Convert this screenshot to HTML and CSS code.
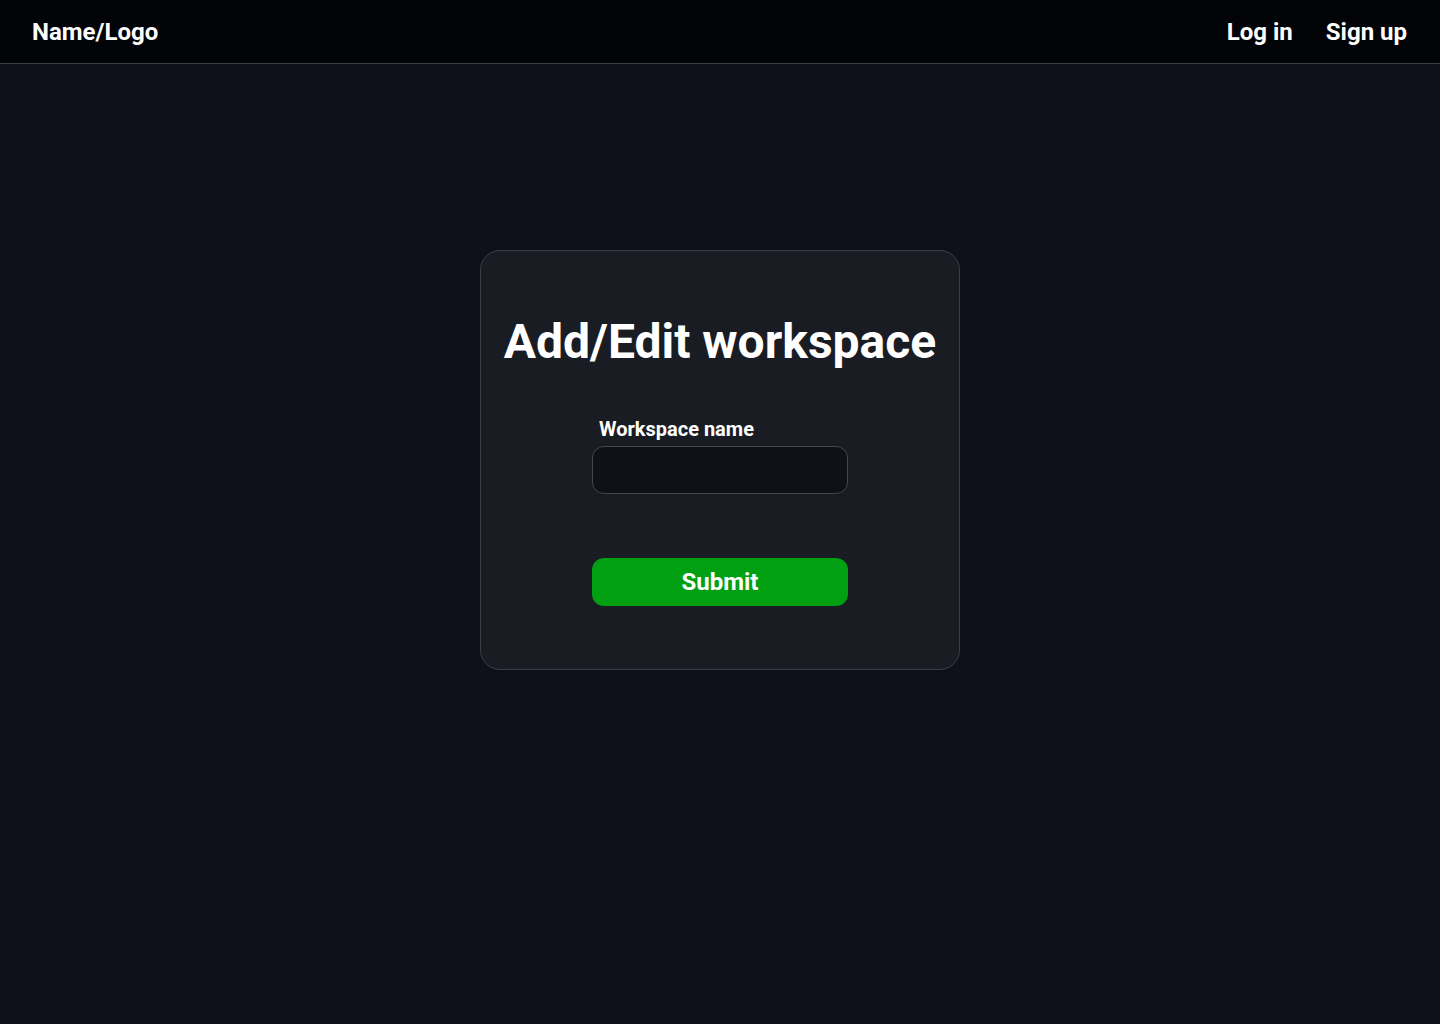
FILE: index.html
```html
<!DOCTYPE html>
<html lang="en">
<head>
<meta charset="utf-8">
<title>Add/Edit workspace</title>
<link rel="stylesheet" href="styles.css">
</head>
<body>
<header class="topbar">
  <a class="brand" href="#">Name/Logo</a>
  <nav class="nav">
    <a href="#" class="nav-link">Log in</a>
    <a href="#" class="nav-link">Sign up</a>
  </nav>
</header>
<main class="main">
  <form class="card">
    <h1 class="title">Add/Edit workspace</h1>
    <div class="field">
      <label class="label" for="ws">Workspace name</label>
      <input class="input" id="ws" type="text">
    </div>
    <button class="submit" type="button">Submit</button>
  </form>
</main>
</body>
</html>
```
FILE: styles.css
```css
* { box-sizing: border-box; }
html, body { margin: 0; padding: 0; }
body {
  background: #0e1119;
  color: #ffffff;
  font-family: Roboto, "Liberation Sans", sans-serif;
  min-height: 1024px;
}
.topbar {
  height: 64px;
  background: #020307;
  border-bottom: 1px solid #3a3d42;
  display: flex;
  align-items: center;
  justify-content: space-between;
  padding: 0 33px 0 32px;
}
.brand, .nav-link {
  color: #ffffff;
  text-decoration: none;
  font-weight: 700;
  font-size: 24px;
}
.nav { display: flex; gap: 33px; }
.main {
  display: flex;
  justify-content: center;
  padding-top: 186px;
}
.card {
  width: 480px;
  height: 420px;
  background: #1a1c23;
  border: 1px solid #3c3e44;
  border-radius: 20px;
  display: flex;
  flex-direction: column;
  align-items: center;
  padding-top: 63px;
}
.title {
  margin: 0;
  font-size: 48px;
  font-weight: 700;
  line-height: 56px;
}
.field {
  margin-top: 48px;
  width: 256px;
  display: flex;
  flex-direction: column;
}
.label {
  font-size: 20px;
  font-weight: 700;
  line-height: 23px;
  padding-left: 7px;
  margin-bottom: 5px;
}
.input {
  width: 256px;
  height: 48px;
  background: #0e1118;
  border: 1px solid #45474c;
  border-radius: 12px;
  color: #fff;
  font-size: 16px;
  padding: 0 12px;
  outline: none;
}
.submit {
  margin-top: 64px;
  width: 256px;
  height: 48px;
  background: #00a012;
  border: none;
  border-radius: 12px;
  color: #ffffff;
  font-family: Roboto, "Liberation Sans", sans-serif;
  font-weight: 700;
  font-size: 24px;
}
```
